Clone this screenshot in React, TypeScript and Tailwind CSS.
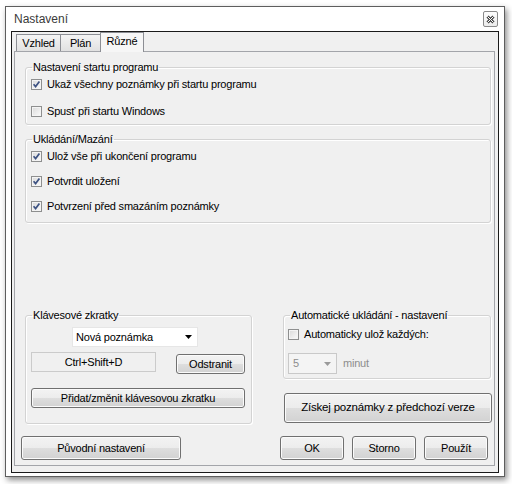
import clsx from 'clsx'

function Check({ checked }: { checked?: boolean }) {
  return (
    <span className="flex h-[11px] w-[11px] shrink-0 items-center justify-center border border-[#8e8f8f] bg-gradient-to-br from-[#dadada] to-[#fbfbfb] shadow-[inset_0_0_0_1px_#f4f4f4]">
      {checked && (
        <svg width="9" height="9" viewBox="0 0 9 9">
          <path d="M1.6 4.3 L3.6 6.6 L7.4 1.6" fill="none" stroke="#3d5282" strokeWidth="1.7" />
        </svg>
      )}
    </span>
  )
}

function Row({ checked, label }: { checked?: boolean; label: string }) {
  return (
    <div className="flex h-[16px] items-center gap-[5px]">
      <Check checked={checked} />
      <span>{label}</span>
    </div>
  )
}

function Btn({ children, className }: { children: React.ReactNode; className?: string }) {
  return (
    <div
      className={clsx(
        'flex items-center justify-center rounded-[3px] border border-[#707070] bg-[linear-gradient(#f3f3f3_0%,#ececec_50%,#dedede_50%,#d2d2d2_100%)] text-black shadow-[inset_0_0_0_1px_#fbfbfb]',
        className
      )}
    >
      {children}
    </div>
  )
}

function Group({ title, className, children }: { title: string; className?: string; children: React.ReactNode }) {
  return (
    <fieldset className={clsx('rounded-[3px] border border-[#d3d3d3] shadow-[inset_1px_1px_0_#fff,1px_1px_0_#fff]', className)}>
      <legend className="ml-[6px] px-[1px] leading-[15px] text-black">{title}</legend>
      {children}
    </fieldset>
  )
}

export default function App() {
  return (
    <div className="h-[484px] w-[512px] overflow-hidden bg-white pl-[5px] pt-[6px] font-['Liberation_Sans','Arial',sans-serif] text-[11px] tracking-[-0.2px] text-black">
      <div className="flex h-[471px] w-[500px] flex-col border border-[#5e5e5e] bg-white shadow-[2px_3px_6px_rgba(0,0,0,0.45)]">
        {/* title bar */}
        <div className="flex h-[24px] items-center justify-between pl-[8px] pr-[6px]">
          <span className="text-[12px] tracking-normal text-[#3a3a3a]">Nastavení</span>
          <div className="flex h-[16px] w-[15px] items-center justify-center rounded-[2px] border border-[#8a8a8a] bg-gradient-to-b from-[#fdfdfd] to-[#ececec]">
            <svg width="9" height="9" viewBox="0 0 9 9">
              <path d="M1.5 1.5 L7.5 7.5 M7.5 1.5 L1.5 7.5" stroke="#444" strokeWidth="3" />
              <path d="M1.5 1.5 L7.5 7.5 M7.5 1.5 L1.5 7.5" stroke="#fff" strokeWidth="1" />
            </svg>
          </div>
        </div>

        {/* client */}
        <div className="mx-[5px] flex h-[442px] flex-col border border-[#1a1a1a] bg-[#f0f0f0]">
          <div className="flex h-[19px] items-end pl-[4px]">
            <div className="flex h-[17px] w-[45px] items-center justify-center border-l border-r border-t border-[#8c8e94] bg-gradient-to-b from-[#f4f4f4] to-[#e1e1e1]">
              Vzhled
            </div>
            <div className="-ml-px flex h-[17px] w-[41px] items-center justify-center border-l border-r border-t border-[#8c8e94] bg-gradient-to-b from-[#f4f4f4] to-[#e1e1e1]">
              Plán
            </div>
            <div className="relative z-10 -mb-px -ml-px flex h-[20px] w-[44px] items-center justify-center border-l border-r border-t border-[#8c8e94] bg-[#f6f6f6] pb-[2px]">
              Různé
            </div>
          </div>

          {/* tab page */}
          <div className="ml-[2px] flex h-[415px] w-[481px] flex-col border border-[#a3a5aa] bg-[#f0f0f0] pl-[6px]">
            <Group title="Nastavení startu programu" className="ml-[4px] mt-[8px] w-[466px]">
              <div className="flex flex-col gap-[11px] pb-[5px] pl-[5px] pt-[1px]">
                <Row checked label="Ukaž všechny poznámky při startu programu" />
                <Row label="Spusť při startu Windows" />
              </div>
            </Group>

            <Group title="Ukládání/Mazání" className="ml-[4px] mt-[7px] w-[466px]">
              <div className="flex flex-col gap-[9px] pb-[8px] pl-[5px] pt-[1px]">
                <Row checked label="Ulož vše při ukončení programu" />
                <Row checked label="Potvrdit uložení" />
                <Row checked label="Potvrzení před smazáním poznámky" />
              </div>
            </Group>

            <div className="ml-[4px] mt-[85px] flex">
              <Group title="Klávesové zkratky" className="w-[227px]">
                <div className="flex flex-col pb-[15px] pl-[5px]">
                  <div className="ml-[41px] mt-[4px] flex h-[20px] w-[126px] items-center justify-between border border-[#e6e6e6] bg-white pl-[3px] pr-[5px]">
                    <span>Nová poznámka</span>
                    <svg width="7" height="4" viewBox="0 0 7 4">
                      <path d="M0 0 H7 L3.5 4 Z" fill="#000" />
                    </svg>
                  </div>
                  <div className="mt-[5px] flex items-start">
                    <div className="flex h-[20px] w-[125px] items-center justify-center border border-[#cbcbcb] bg-[#f0f0f0]">
                      Ctrl+Shift+D
                    </div>
                    <Btn className="ml-[20px] mt-[2px] h-[20px] w-[69px]">Odstranit</Btn>
                  </div>
                  <Btn className="mt-[14px] h-[20px] w-[214px]">Přidat/změnit klávesovou zkratku</Btn>
                </div>
              </Group>

              <div className="ml-[31px] flex w-[208px] flex-col">
                <Group title="Automatické ukládání - nastavení" className="w-[208px]">
                  <div className="flex flex-col pb-[4px] pl-[4px]">
                    <div className="mt-[3px]">
                      <Row label="Automaticky ulož každých:" />
                    </div>
                    <div className="mt-[11px] flex items-center">
                      <div className="flex h-[21px] w-[49px] items-center justify-between border border-[#c9c9c9] bg-[#f4f4f4] pl-[4px] pr-[5px] text-[#8d8d8d]">
                        <span>5</span>
                        <svg width="7" height="4" viewBox="0 0 7 4">
                          <path d="M0 0 H7 L3.5 4 Z" fill="#9a9a9a" />
                        </svg>
                      </div>
                      <span className="ml-[6px] text-[#8d8d8d]">minut</span>
                    </div>
                  </div>
                </Group>
                <Btn className="ml-px mt-[14px] h-[30px] w-[208px] text-[11.5px] tracking-[-0.2px]">Získej poznámky z předchozí verze</Btn>
              </div>
            </div>

            <div className="mt-[12px] flex">
              <Btn className="h-[24px] w-[160px]">Původní nastavení</Btn>
              <div className="ml-auto mr-[6px] flex gap-[8px]">
                <Btn className="h-[24px] w-[64px]">OK</Btn>
                <Btn className="h-[24px] w-[64px]">Storno</Btn>
                <Btn className="h-[24px] w-[64px]">Použít</Btn>
              </div>
            </div>
          </div>
        </div>
      </div>
    </div>
  )
}
